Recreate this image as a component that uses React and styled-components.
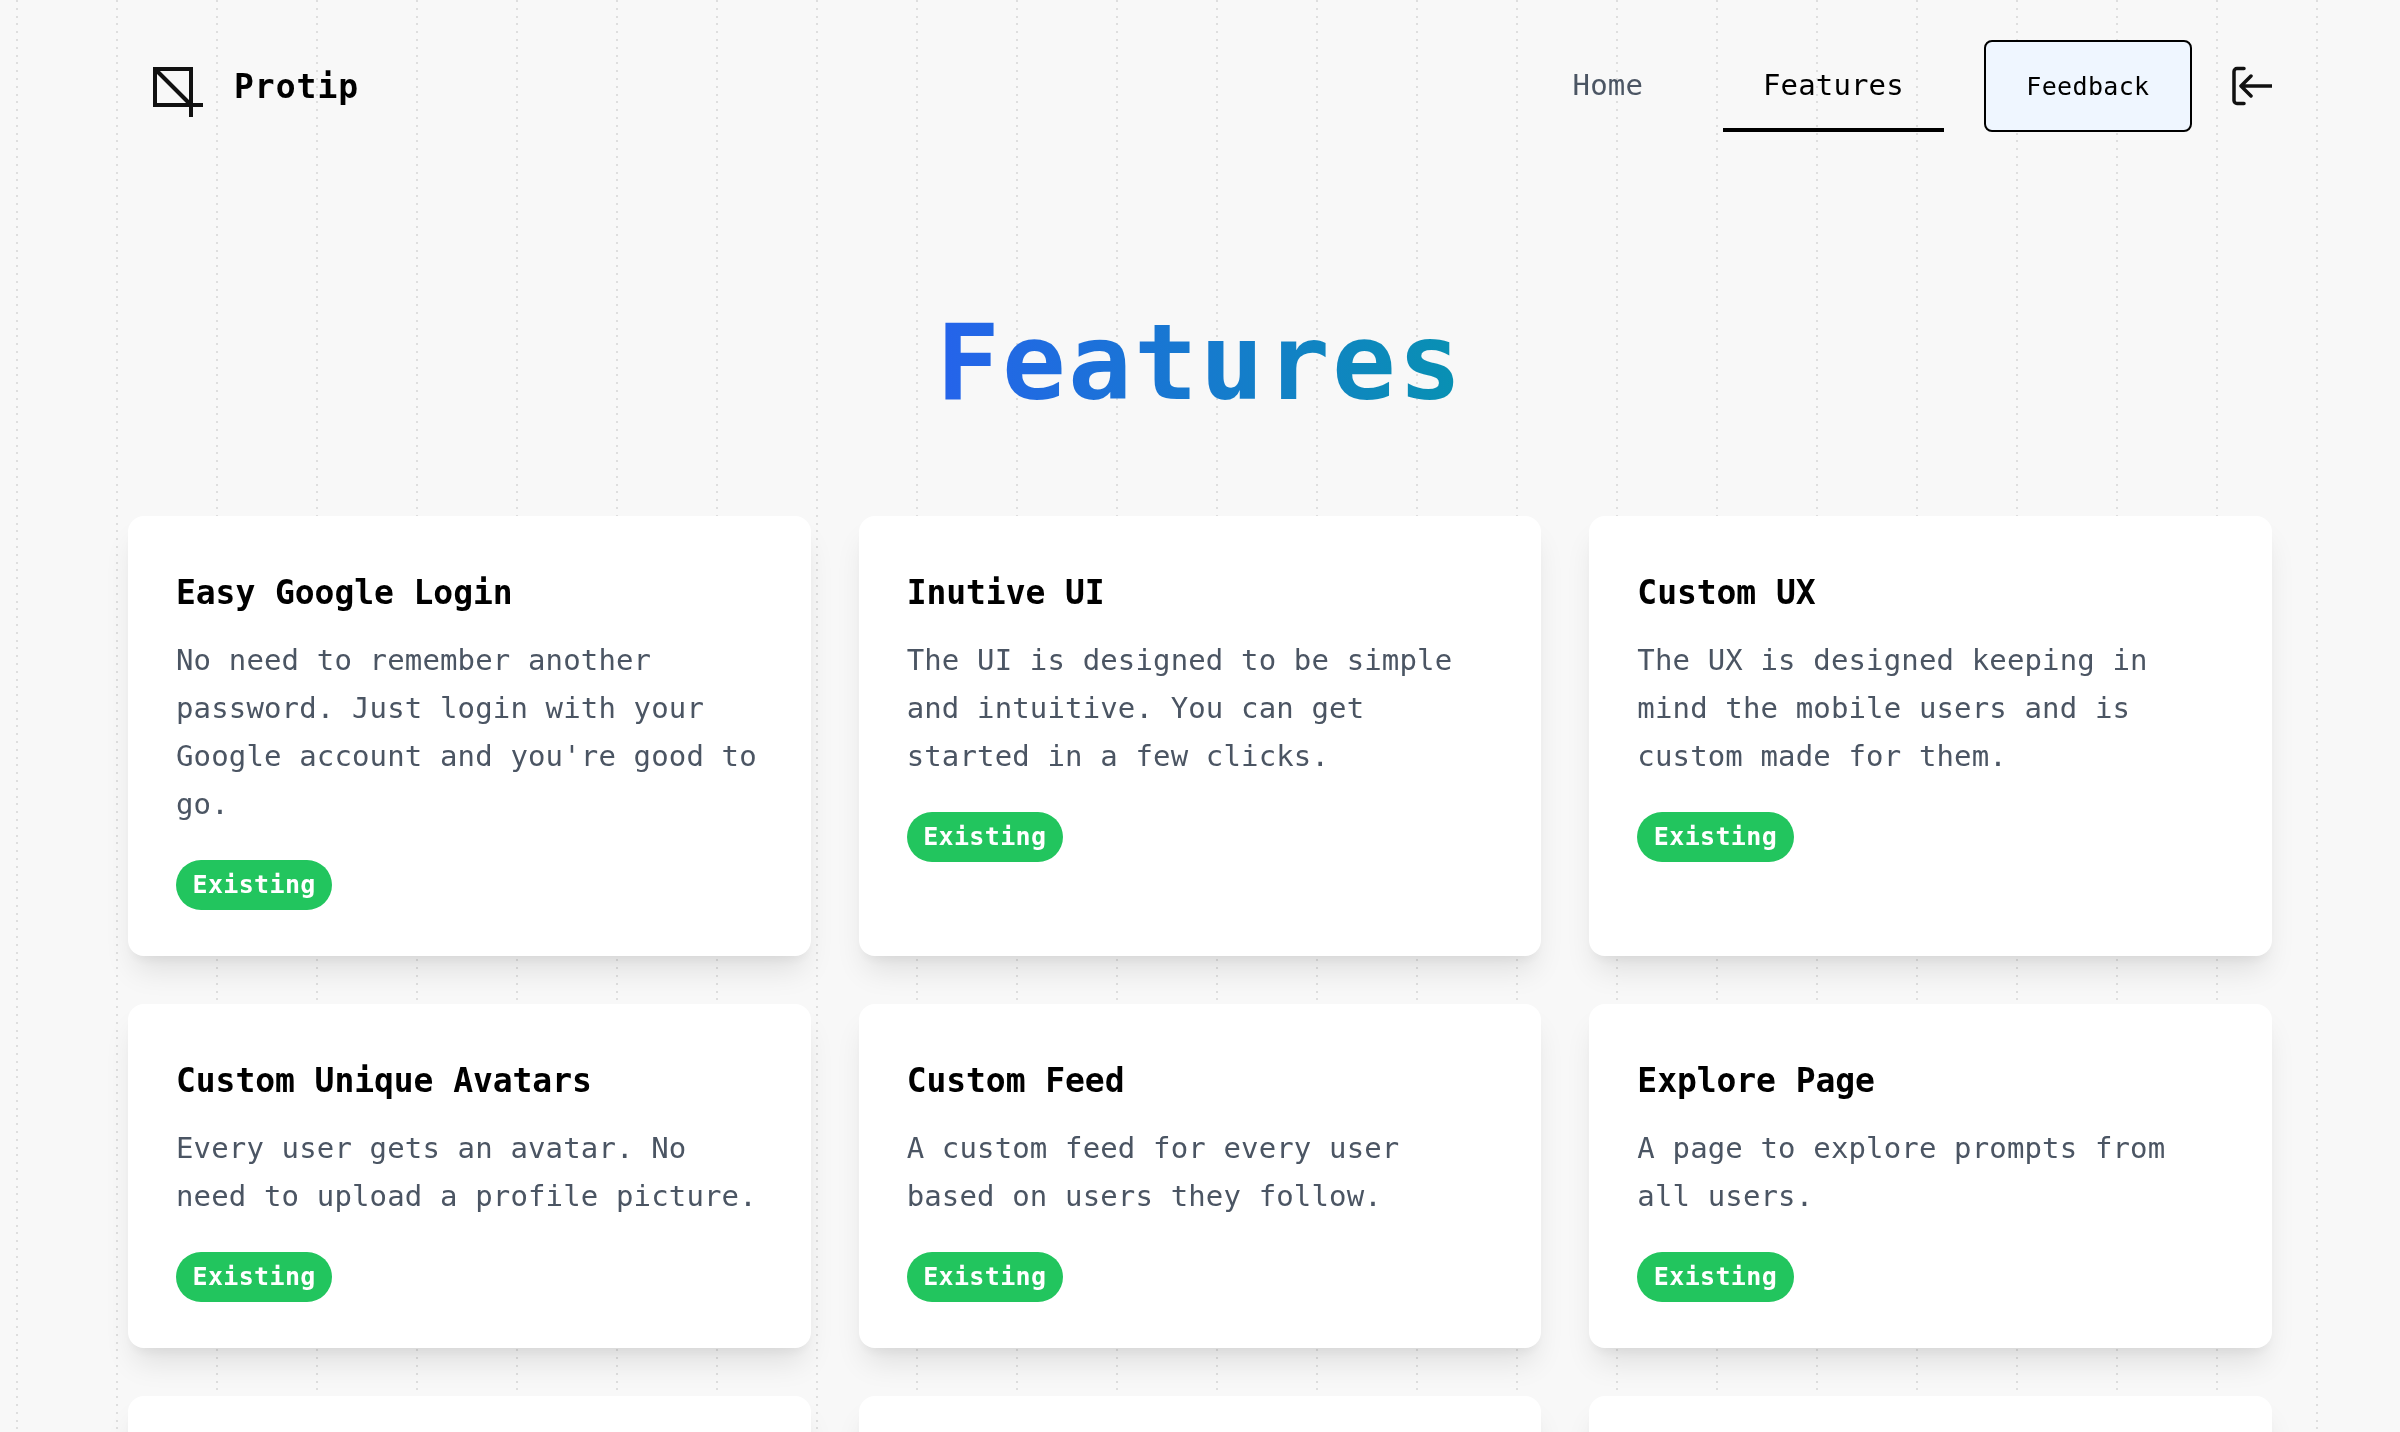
import React from 'react'
import styled, { createGlobalStyle } from 'styled-components'

const FONT = `"DejaVu Sans Mono", "Liberation Mono", monospace`

const GlobalStyle = createGlobalStyle`
  html, body {
    margin: 0;
    height: 100%;
    overflow: hidden;
  }
  body {
    background-color: #f8f8f8;
    font-family: ${FONT};
  }
`

const DotLines = styled.div`
  position: fixed;
  inset: 0;
  background-image: repeating-linear-gradient(to bottom, #dedede 0 2px, transparent 2px 7.8px);
  -webkit-mask-image: repeating-linear-gradient(to right, transparent 0 16px, #000 16px 18px, transparent 18px 100px);
  mask-image: repeating-linear-gradient(to right, transparent 0 16px, #000 16px 18px, transparent 18px 100px);
`

const Page = styled.div`
  position: relative;
  box-sizing: border-box;
  height: 100vh;
  overflow: hidden;
  padding: 40px 128px 0;
`

const Header = styled.header`
  display: flex;
  align-items: center;
  justify-content: space-between;
  height: 92px;
`

const Brand = styled.div`
  display: flex;
  align-items: center;
  gap: 31px;
  padding-left: 25px;
`

const BrandMark = styled.span`
  display: flex;
  margin-top: 12px;
`

const BrandName = styled.span`
  font-size: 33px;
  font-weight: 700;
  color: #000;
  letter-spacing: 1px;
`

const Nav = styled.nav`
  display: flex;
  align-items: center;
  gap: 40px;
`

const NavLink = styled.a`
  display: block;
  padding: 0 40px;
  height: 92px;
  line-height: 90px;
  font-size: 29px;
  letter-spacing: 0.14px;
  color: ${p => (p.$active ? '#000' : '#4b5563')};
  border-bottom: 4px solid ${p => (p.$active ? '#000' : 'transparent')};
  box-sizing: border-box;
`

const FeedbackButton = styled.button`
  height: 92px;
  padding: 0 40.5px;
  box-sizing: border-box;
  background: #eff6ff;
  border: 2px solid #000;
  border-radius: 8px;
  font-family: ${FONT};
  font-size: 25px;
  letter-spacing: 0.35px;
  color: #000;
`

const IconButton = styled.span`
  display: flex;
`

const Title = styled.h1`
  margin: 171px 0 93px;
  height: 120px;
  text-align: center;
  font-size: 106px;
  line-height: 120px;
  font-weight: 700;
  letter-spacing: 2.2px;
`

const GradientText = styled.span`
  background: linear-gradient(to right, #2563eb, #0891b2);
  -webkit-background-clip: text;
  background-clip: text;
  color: transparent;
`

const Grid = styled.div`
  display: grid;
  grid-template-columns: repeat(3, 1fr);
  gap: 48px;
`

const Card = styled.article`
  display: flex;
  flex-direction: column;
  align-items: flex-start;
  padding: 48px 48px 46px;
  min-height: 100px;
  background: #fff;
  border-radius: 16px;
  box-shadow: 0 20px 30px -6px rgba(0, 0, 0, 0.1), 0 8px 12px -4px rgba(0, 0, 0, 0.05);
`

const CardTitle = styled.h2`
  margin: 0 0 14px;
  font-size: 33px;
  line-height: 58px;
  font-weight: 700;
  letter-spacing: -0.07px;
  color: #000;
`

const CardText = styled.p`
  margin: 0 0 32px;
  font-size: 29px;
  line-height: 48px;
  letter-spacing: 0.14px;
  color: #4b5563;
`

const Badge = styled.span`
  display: block;
  height: 50px;
  line-height: 50px;
  padding: 0 16.5px;
  border-radius: 25px;
  background: #22c55e;
  color: #fff;
  font-size: 25px;
  font-weight: 700;
  letter-spacing: 0.35px;
`

const features = [
  { title: 'Easy Google Login', lines: ['No need to remember another', 'password. Just login with your', "Google account and you're good to", 'go.'] },
  { title: 'Inutive UI', lines: ['The UI is designed to be simple', 'and intuitive. You can get', 'started in a few clicks.'] },
  { title: 'Custom UX', lines: ['The UX is designed keeping in', 'mind the mobile users and is', 'custom made for them.'] },
  { title: 'Custom Unique Avatars', lines: ['Every user gets an avatar. No', 'need to upload a profile picture.'] },
  { title: 'Custom Feed', lines: ['A custom feed for every user', 'based on users they follow.'] },
  { title: 'Explore Page', lines: ['A page to explore prompts from', 'all users.'] },
]

const LogoIcon = () => (
  <svg width="50" height="50" viewBox="0 0 50 50" fill="none" stroke="#111" strokeWidth="4">
    <path d="M2 2H38V38H2Z" />
    <path d="M2 2L38 38" />
    <path d="M38 38H50M38 38V50" />
  </svg>
)

const ExitIcon = () => (
  <svg width="40" height="40" viewBox="0 0 40 40" fill="none" stroke="#111" strokeWidth="3.5" strokeLinecap="round" strokeLinejoin="round">
    <path d="M12 2.500H5a3 3 0 0 0-3 3V34.500a3 3 0 0 0 3 3H12" />
    <path d="M40 20H10M19 10L9 20L19 30" />
  </svg>
)

const App = () => (
  <>
    <GlobalStyle />
    <DotLines />
    <Page>
      <Header>
        <Brand>
          <BrandMark><LogoIcon /></BrandMark>
          <BrandName>Protip</BrandName>
        </Brand>
        <Nav>
          <NavLink>Home</NavLink>
          <NavLink $active>Features</NavLink>
          <FeedbackButton>Feedback</FeedbackButton>
          <IconButton><ExitIcon /></IconButton>
        </Nav>
      </Header>
      <Title><GradientText>Features</GradientText></Title>
      <Grid>
        {features.map(f => (
          <Card key={f.title}>
            <CardTitle>{f.title}</CardTitle>
            <CardText>{f.lines.map(l => <React.Fragment key={l}>{l}<br /></React.Fragment>)}</CardText>
            <Badge>Existing</Badge>
          </Card>
        ))}
        <Card />
        <Card />
        <Card />
      </Grid>
    </Page>
  </>
)

export default App
